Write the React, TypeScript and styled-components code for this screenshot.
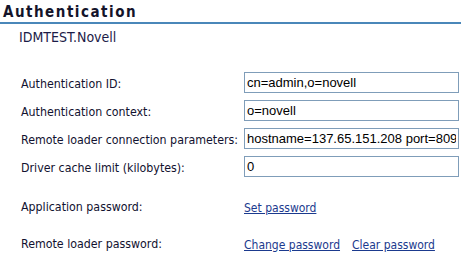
import React from "react";
import styled, { createGlobalStyle } from "styled-components";

const Global = createGlobalStyle`
  html, body { margin: 0; padding: 0; background: #ffffff; }
  body { font-family: "DejaVu Sans Condensed", "DejaVu Sans", sans-serif; }
`;

const Page = styled.div`
  width: 461px;
  height: 253px;
  overflow: hidden;
  background: #fff;
`;

const Header = styled.h2`
  margin: 0;
  padding: 3px 0 0 3px;
  height: 19px;
  font-family: "DejaVu Sans Condensed", "DejaVu Sans", sans-serif;
  font-size: 15px;
  font-weight: bold;
  letter-spacing: 1.5px;
  line-height: 18px;
  color: #14142a;
  border-bottom: 2px solid #4a87b9;
`;

const Context = styled.div`
  padding: 5px 0 0 19px;
  font-size: 14px;
  line-height: 17px;
  color: #1c1c48;
`;

const Form = styled.div`
  display: grid;
  grid-template-columns: 223px 215px;
  padding: 0 0 0 21px;
  margin-top: 22px;
`;

const Row = styled.div<{ $h: number; $mt?: number }>`
  display: contents;
  & > * {
    height: ${(p) => p.$h}px;
    margin-top: ${(p) => p.$mt ?? 0}px;
  }
`;

const Label = styled.div<{ $pt: number }>`
  font-size: 12.3px;
  color: #121230;
  padding-top: ${(p) => p.$pt}px;
  box-sizing: border-box;
  white-space: nowrap;
`;

const Cell = styled.div`
  display: flex;
  align-items: center;
  gap: 12px;
`;

const Input = styled.input`
  box-sizing: border-box;
  width: 215px;
  height: 21px;
  border: 1px solid #7f9db9;
  padding: 0 2px;
  margin: 0;
  font-family: "Liberation Sans", Arial, sans-serif;
  font-size: 13px;
  color: #000;
  background: #fff;
  outline: none;
`;

const Link = styled.a`
  font-size: 12px;
  color: #1b3a8e;
  text-decoration: underline;
  cursor: pointer;
`;

const fields = [
  ["Authentication ID:", "cn=admin,o=novell"],
  ["Authentication context:", "o=novell"],
  ["Remote loader connection parameters:", "hostname=137.65.151.208 port=8090"],
  ["Driver cache limit (kilobytes):", "0"],
];

export default function App() {
  return (
    <Page>
      <Global />
      <Header>Authentication</Header>
      <Context>IDMTEST.Novell</Context>
      <Form>
        {fields.map(([l, v]) => (
          <Row key={l} $h={28}>
            <Label $pt={9}>{l}</Label>
            <Cell>
              <Input defaultValue={v} readOnly />
            </Cell>
          </Row>
        ))}
        <Row $h={37} $mt={9}>
          <Label $pt={11}>Application password:</Label>
          <Cell>
            <Link>Set password</Link>
          </Cell>
        </Row>
        <Row $h={37}>
          <Label $pt={11}>Remote loader password:</Label>
          <Cell>
            <Link>Change password</Link>
            <Link>Clear password</Link>
          </Cell>
        </Row>
      </Form>
    </Page>
  );
}
